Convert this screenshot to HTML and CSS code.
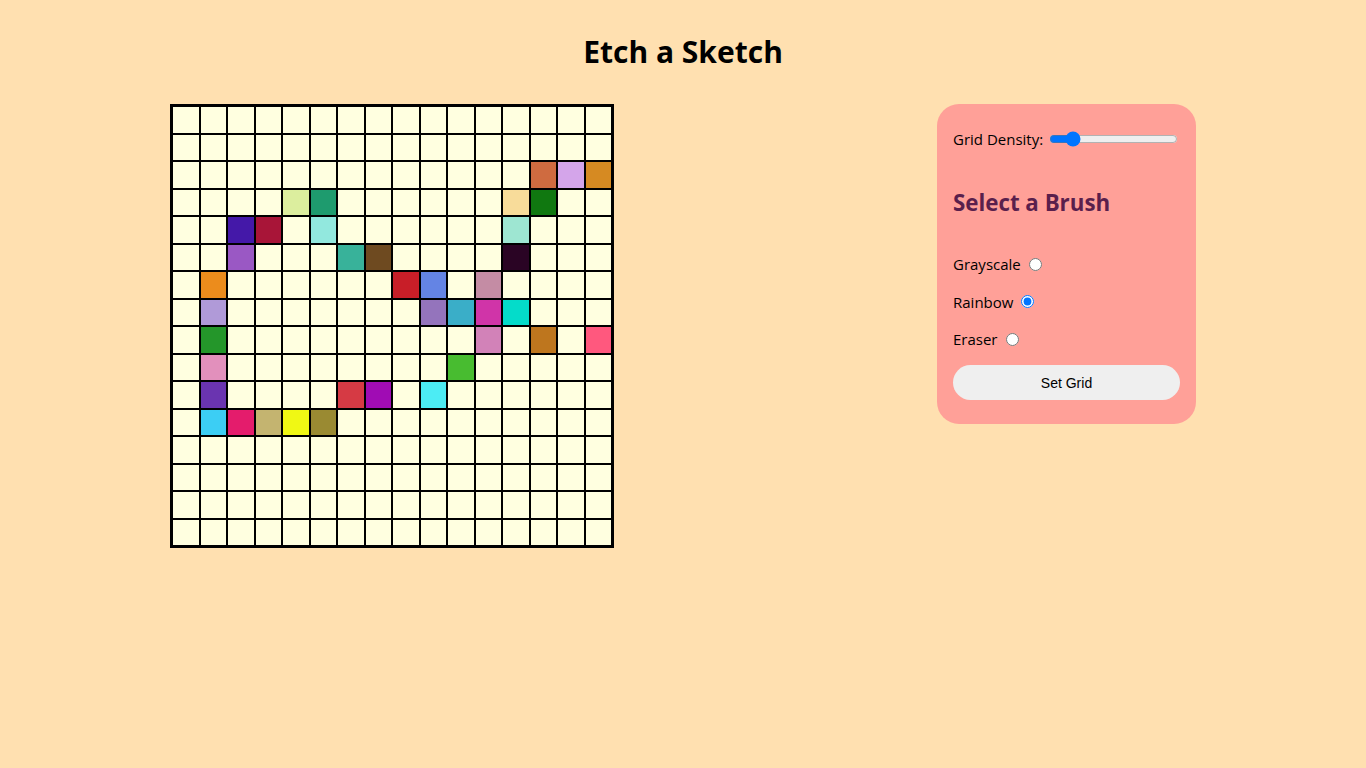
FILE: index.html
```html
<!DOCTYPE html>
<html lang="en">
<head>
<meta charset="utf-8">
<title>Etch a Sketch</title>
<link rel="stylesheet" href="styles.css">
</head>
<body>
<h1 class="title">Etch a Sketch</h1>
<main class="layout">
  <div class="grid" id="grid"></div>
  <aside class="panel">
    <div class="density">
      <label for="density">Grid Density:</label>
      <input type="range" id="density" class="slider" min="2" max="100" value="16">
    </div>
    <h2 class="brush-title">Select a Brush</h2>
    <div class="option"><label for="gray">Grayscale</label><input type="radio" name="brush" id="gray"></div>
    <div class="option"><label for="rainbow">Rainbow</label><input type="radio" name="brush" id="rainbow" checked></div>
    <div class="option"><label for="eraser">Eraser</label><input type="radio" name="brush" id="eraser"></div>
    <button class="set-btn" type="button">Set Grid</button>
  </aside>
</main>
<script src="script.js"></script>
</body>
</html>
```
FILE: styles.css
```css
* { box-sizing: border-box; }
body {
  margin: 0;
  background: #ffe0b0;
  font-family: "Open Sans", "Noto Sans", sans-serif;
  color: #000;
}
.title {
  margin: 0;
  padding-top: 31px;
  height: 104px;
  text-align: center;
  font-size: 30px;
  font-weight: 700;
  line-height: 42px;
}
.layout {
  display: flex;
  justify-content: space-between;
  align-items: flex-start;
  padding: 0 170px;
}
.grid {
  width: 444px;
  height: 444px;
  border: 2px solid #000;
  display: grid;
  grid-template-columns: repeat(16, 1fr);
  grid-template-rows: repeat(16, 1fr);
}
.cell {
  border: 1px solid #000;
  background: #ffffe0;
}
.panel {
  width: 259px;
  background: #ffa098;
  border-radius: 22px;
  padding: 24px 16px 24px;
  display: flex;
  flex-direction: column;
  font-size: 15px;
}
.density {
  display: flex;
  align-items: center;
  height: 22px;
}
.slider {
  width: 129px;
  margin: 0 0 0 6px;
}
.brush-title {
  margin: 37px 0 0;
  font-size: 22.3px;
  line-height: 32px;
  font-weight: 700;
  color: #5a1f4c;
}
.option {
  display: flex;
  align-items: center;
  height: 22px;
  margin-top: 15.5px;
}
.brush-title + .option { margin-top: 34px; }
.option input {
  margin: 0 0 0 8px;
  width: 13px;
  height: 13px;
}
.set-btn {
  margin-top: 15px;
  height: 35px;
  border: none;
  border-radius: 18px;
  background: #efefef;
  font-family: "Liberation Sans", Arial, sans-serif;
  font-size: 14px;
  color: #000;
}
```
FILE: script.js
```js
var colors = {
  "2,13": "#cf6b40", "2,14": "#d4a5ea", "2,15": "#d68a22",
  "3,4": "#dcee9e", "3,5": "#1e9b6e", "3,12": "#f8dc9a", "3,13": "#107810",
  "4,2": "#4418a8", "4,3": "#a81538", "4,5": "#92e8de", "4,12": "#9ee6d2",
  "5,2": "#9a58c4", "5,6": "#38b29a", "5,7": "#6e4a20", "5,12": "#2a0424",
  "6,1": "#ec8c1c", "6,8": "#c81e28", "6,9": "#6484e4", "6,11": "#c48ca4",
  "7,1": "#b09ad8", "7,9": "#9474bc", "7,10": "#3aaec8", "7,11": "#d034a8", "7,12": "#04dcca",
  "8,1": "#24962a", "8,11": "#d282b8", "8,13": "#be761e", "8,15": "#ff587e",
  "9,1": "#e290bc", "9,10": "#48bc30",
  "10,1": "#6a34b0", "10,6": "#d63a44", "10,7": "#a00cb4", "10,9": "#4cecf4",
  "11,1": "#3ccef4", "11,2": "#e41c6c", "11,3": "#c4b470", "11,4": "#f0f814", "11,5": "#9a8a32"
};
var grid = document.getElementById("grid");
for (var r = 0; r < 16; r++) {
  for (var c = 0; c < 16; c++) {
    var d = document.createElement("div");
    d.className = "cell";
    var k = r + "," + c;
    if (colors[k]) d.style.background = colors[k];
    grid.appendChild(d);
  }
}
```
